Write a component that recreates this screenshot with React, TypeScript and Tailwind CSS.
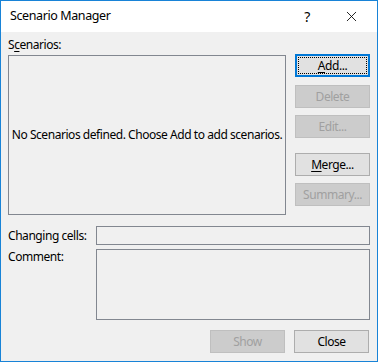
import { X } from "lucide-react";

const font = { fontFamily: '"Noto Sans", "Open Sans", sans-serif' };

function Btn({
  label,
  ul,
  disabled,
  focused,
  className = "",
}: {
  label: string;
  ul?: number;
  disabled?: boolean;
  focused?: boolean;
  className?: string;
}) {
  const text =
    ul === undefined ? (
      label
    ) : (
      <>
        {label.slice(0, ul)}
        <span className="underline underline-offset-2">{label[ul]}</span>
        {label.slice(ul + 1)}
      </>
    );
  if (focused) {
    return (
      <div className={`h-[23px] w-[75px] border-2 border-[#0078d7] bg-[#e1e1e1] p-[1px] ${className}`}>
        <div className="flex h-full w-full items-center justify-center border border-dotted border-black text-[12px] text-black">
          {text}
        </div>
      </div>
    );
  }
  return (
    <div
      className={`flex h-[23px] w-[75px] items-center justify-center border text-[12px] ${
        disabled ? "border-[#bfbfbf] bg-[#cccccc] text-[#a0a0a0]" : "border-[#adadad] bg-[#e1e1e1] text-black"
      } ${className}`}
    >
      {text}
    </div>
  );
}

export default function App() {
  return (
    <div
      className="h-[362px] w-[378px] whitespace-nowrap border border-[#1883d7] bg-[#f0f0f0] tracking-[-0.45px] text-black"
      style={font}
    >
      <div className="flex h-[31px] items-center bg-white pl-[9px]">
        <span className="flex-1 text-[12.5px] tracking-[-0.4px]">Scenario Manager</span>
        <span className="w-[14px] text-center text-[14px]">?</span>
        <X className="ml-[29px] mr-[17px] h-[17px] w-[17px]" strokeWidth={1.2} />
      </div>
      <div className="px-[7px]">
        <div className="flex">
          <div className="w-[278px]">
            <div className="pt-[5px] text-[12px] leading-[16px]">
              S<span className="underline underline-offset-2">c</span>enarios:
            </div>
            <div className="mt-[2px] flex h-[160px] items-center justify-center border border-[#828790] text-[12px]">
              No Scenarios defined. Choose Add to add scenarios.
            </div>
          </div>
          <div className="ml-[9px] flex flex-col pt-[22px]">
            <Btn label="Add..." ul={0} focused />
            <Btn label="Delete" disabled className="mt-[8px]" />
            <Btn label="Edit..." disabled className="mt-[7px]" />
            <Btn label="Merge..." ul={0} className="mt-[15px]" />
            <Btn label="Summary..." disabled className="mt-[7px]" />
          </div>
        </div>
        <div className="mt-[11px] flex items-center">
          <span className="w-[88px] text-[12px]">Changing cells:</span>
          <div className="h-[19px] w-[275px] border border-[#828790]" />
        </div>
        <div className="mt-[4px] flex">
          <span className="w-[88px] text-[12px] leading-[16px]">Comment:</span>
          <div className="h-[71px] w-[275px] border border-[#828790]" />
        </div>
        <div className="mt-[10px] flex justify-end gap-[9px] pr-[1px]">
          <Btn label="Show" disabled />
          <Btn label="Close" />
        </div>
      </div>
    </div>
  );
}
